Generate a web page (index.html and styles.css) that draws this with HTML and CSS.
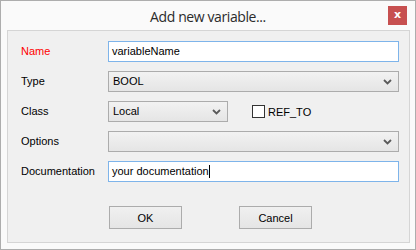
FILE: index.html
```html
<!DOCTYPE html>
<html lang="en">

<head>
  <meta charset="UTF-8">
  <title>Add new variable...</title>
  <link rel="stylesheet" href="styles.css">
</head>

<body>
  <div class="window">
    <div class="titlebar">
      <span class="title">Add new variable...</span>
      <div class="close">x</div>
    </div>
    <div class="panel">
      <div class="form">
        <label class="label required">Name</label>
        <div class="textbox">variableName</div>

        <label class="label">Type</label>
        <div class="combo">
          <span>BOOL</span>
          <svg class="chevron" width="9" height="6" viewBox="0 0 9 6"><path d="M1 1 L4.5 4.5 L8 1" fill="none" stroke="#5a5a5a" stroke-width="1.8"/></svg>
        </div>

        <label class="label">Class</label>
        <div class="class-row">
          <div class="combo small">
            <span>Local</span>
            <svg class="chevron" width="9" height="6" viewBox="0 0 9 6"><path d="M1 1 L4.5 4.5 L8 1" fill="none" stroke="#5a5a5a" stroke-width="1.8"/></svg>
          </div>
          <div class="check">
            <span class="box"></span>
            <span>REF_TO</span>
          </div>
        </div>

        <label class="label">Options</label>
        <div class="combo">
          <span></span>
          <svg class="chevron" width="9" height="6" viewBox="0 0 9 6"><path d="M1 1 L4.5 4.5 L8 1" fill="none" stroke="#5a5a5a" stroke-width="1.8"/></svg>
        </div>

        <label class="label">Documentation</label>
        <div class="textbox">your documentation<span class="caret"></span></div>
      </div>

      <div class="buttons">
        <button>OK</button>
        <button>Cancel</button>
      </div>
    </div>
  </div>
</body>

</html>
```

FILE: styles.css
```css
body {
  margin: 0;
  font-family: "Liberation Sans", Arial, sans-serif;
  font-size: 11px;
  color: #000;
}

.window {
  width: 416px;
  height: 250px;
  box-sizing: border-box;
  border: 1px solid #adadad;
  background-color: #fafafa;
}

.titlebar {
  position: relative;
  height: 29px;
  display: flex;
  align-items: center;
  justify-content: center;
}

.title {
  font-family: "Open Sans", sans-serif;
  font-size: 14px;
  letter-spacing: -0.4px;
  color: #2b2b2b;
  margin-top: 1px;
}

.close {
  position: absolute;
  left: 387px;
  top: 5px;
  width: 19px;
  height: 19px;
  background-color: #c75050;
  color: white;
  font-family: "DejaVu Sans", sans-serif;
  font-weight: bold;
  font-size: 11px;
  line-height: 17px;
  text-align: center;
}

.panel {
  margin: 0 5px 0 6px;
  height: 213px;
  box-sizing: border-box;
  border: 1px solid #d5d5d5;
  background-color: #f0f0f0;
  padding: 10px 10px 0 13px;
}

.form {
  display: grid;
  grid-template-columns: 87px 1fr;
  grid-auto-rows: 21px;
  row-gap: 9px;
}

.label {
  line-height: 21px;
}

.required {
  color: #ff0000;
}

.textbox {
  box-sizing: border-box;
  border: 1px solid #7eb4ea;
  background-color: white;
  padding-left: 3px;
  line-height: 19px;
  white-space: nowrap;
}

.caret {
  display: inline-block;
  width: 1px;
  height: 13px;
  background-color: black;
  vertical-align: -3px;
}

.combo {
  box-sizing: border-box;
  border: 1px solid #acacac;
  background: linear-gradient(#f2f2f2, #e5e5e5);
  padding: 0 6px 0 4px;
  line-height: 19px;
  display: flex;
  justify-content: space-between;
  align-items: center;
}

.combo.small {
  width: 120px;
}

.class-row {
  display: flex;
  align-items: center;
  gap: 24px;
}

.check {
  display: flex;
  align-items: center;
  gap: 3px;
}

.box {
  width: 13px;
  height: 13px;
  box-sizing: border-box;
  border: 1px solid #333;
  background-color: white;
}

.buttons {
  display: flex;
  gap: 57px;
  margin: 24px 0 0 88px;
}

.buttons button {
  width: 73px;
  height: 23px;
  box-sizing: border-box;
  border: 1px solid #acacac;
  background: linear-gradient(#f0f0f0, #e5e5e5);
  font-family: "Liberation Sans", Arial, sans-serif;
  font-size: 11px;
  color: #000;
  padding: 0;
}
```
